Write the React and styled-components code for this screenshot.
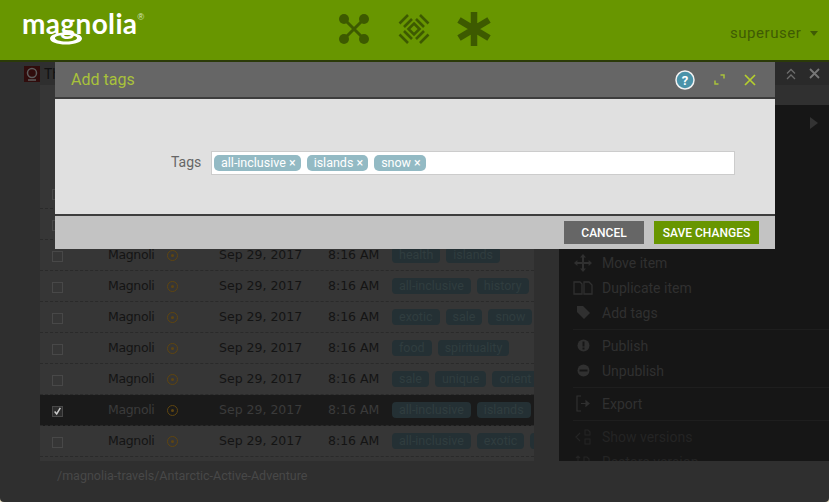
import React from "react";
import styled, { createGlobalStyle } from "styled-components";

const Global = createGlobalStyle`
  html, body { margin: 0; padding: 0; background: #e9e0c4; }
  * { box-sizing: border-box; }
`;
const din = `"Roboto", "Liberation Sans", sans-serif`;

const Page = styled.div`
  position: relative; width: 829px; height: 502px; overflow: hidden;
  display: flex; flex-direction: column; background: #2f2f2f;
  border-radius: 0 0 4px 4px; font-family: ${din};
`;
const Header = styled.header`
  height: 62px; flex: none; background: #689600; border-bottom: 2px solid #2b3a08;
  display: grid; grid-template-columns: 338px 1fr 220px; align-items: center;
`;
const Logo = styled.div`
  position: relative; padding: 0 0 15px 22px; height: 60px; display: flex; align-items: center;
  color: #fff; font: 700 28px/1 "Lato", sans-serif; letter-spacing: .35px;
  svg { position: absolute; left: 49px; top: 32px; }
`;
const Reg = styled.sup`
  font: 400 9px/1 "Liberation Sans", sans-serif; color: #dce8c0; align-self: flex-start;
  margin: 13px 0 0 0;
`;
const AppIcons = styled.nav`
  display: flex; gap: 26.5px; align-items: center; padding-bottom: 2px;
`;
const User = styled.div`
  display: flex; align-items: center; gap: 7px; padding: 7px 0 0 121px; color: #3f5b04;
  font: 400 15px/1 ${din}; letter-spacing: .55px;
`;
const Caret = styled.span`
  width: 0; height: 0; border: 4.5px solid transparent; border-top: 5px solid #3f5b04;
  border-bottom: 0; margin-left: 2px;
`;
const Work = styled.div`flex: 1; display: flex; min-height: 0;`;
const Main = styled.main`
  width: 534px; flex: none; display: flex; flex-direction: column;
`;
const TitleBar = styled.div`
  height: 23px; flex: none; display: flex; align-items: center; gap: 4px; padding-left: 24px;
  color: #111; font-size: 14px;
`;
const Table = styled.div`
  margin-left: 40px; height: 376px; background: #363636; padding-top: 93px; flex: none; overflow: hidden;
`;
const Row = styled.div`
  height: 31px; display: grid; grid-template-columns: 68px 58px 53px 109px 64px 142px;
  align-items: center; border-bottom: 1px dashed #2a2a2a;
  background: ${p => (p.$on ? "#1a1a1a" : "transparent")};
  color: ${p => (p.$on ? "#3a3a3a" : "#141414")};
  font: 400 12.5px/1 "DejaVu Sans", sans-serif; white-space: nowrap;
`;
const Name = styled.span`letter-spacing: -.35px;`;
const Check = styled.span`
  width: 11px; height: 11px; margin: 2px 0 0 12px; border: 1px solid #484848;
  display: flex; align-items: center; justify-content: center;
  background: ${p => (p.$on ? "#2c2c2c" : "transparent")};
`;
const Status = styled.span`
  width: 11px; height: 11px; margin-left: 1px; border-radius: 50%; border: 1.5px solid #5f4510;
  display: flex; align-items: center; justify-content: center;
  &::after { content: ""; width: 3px; height: 3px; border-radius: 50%; background: #5f4510; }
`;
const Tags = styled.div`display: flex; gap: 6px; overflow: hidden;`;
const RowTag = styled.span`
  height: 16px; flex: none; padding: 0 7px; border-radius: 4px; background: #243034; color: #303d3f;
  font: 400 12.5px/16px ${din};
`;
const StatusBar = styled.div`
  flex: 1; padding: 7px 0 0 57px; color: #484848; font-size: 12.5px;
`;
const Side = styled.aside`flex: 1; display: flex; flex-direction: column; padding-left: 25px;`;
const SideTop = styled.div`
  height: 23px; margin-left: -25px; padding-right: 9px; background: #2a2a2a; flex: none;
  display: flex; justify-content: flex-end; align-items: center; gap: 13px; color: #6c6c6c;
`;
const SideSub = styled.div`height: 20px; flex: none; margin-left: -25px; background: #303030;`;
const Panel = styled.div`
  height: 356px; flex: none; background: #161616; overflow: hidden; position: relative;
  display: flex; flex-direction: column; padding-top: 145px;
`;
const Play = styled.span`
  position: absolute; right: 11px; top: 12px; width: 0; height: 0;
  border-left: 8px solid #333; border-top: 6px solid transparent; border-bottom: 6px solid transparent;
`;
const Action = styled.div`
  height: 25px; flex: none; display: flex; align-items: center; padding-left: 14px; gap: 9px;
  color: ${p => (p.$dim ? "#242424" : "#303030")}; font: 400 14px/1 ${din};
`;
const ActionIcon = styled.span`width: 20px; display: flex; justify-content: center; flex: none;`;
const Sep = styled.div`height: 1px; margin: 4px 0 3px 14px; background: #1e1e1e; flex: none;`;

const Dialog = styled.section`
  position: absolute; left: 55px; top: 62px; width: 720px; height: 187px;
  display: flex; flex-direction: column; background: #c3c3c3;
`;
const DialogHead = styled.div`
  height: 37px; flex: none; padding: 0 19px 0 16px; display: flex; align-items: center; background: #666;
  border-bottom: 2px solid #3d3d3d; color: #a9c23b; font: 400 16px/1 ${din};
`;
const DialogTitle = styled.span`flex: 1;`;
const HeadTools = styled.div`display: flex; align-items: center;`;
const DialogBody = styled.div`
  height: 117px; flex: none; background: #e0e0e0; border-bottom: 2px solid #3d3d3d;
  display: flex; align-items: flex-start; padding: 52px 40px 0 116px; gap: 11px;
`;
const FieldLabel = styled.label`
  color: #666; font: 400 14px/23px ${din}; width: 29px;
`;
const TagInput = styled.div`
  width: 525px; height: 24px; background: #fff; border: 1px solid #ccc; display: flex;
  align-items: center; gap: 6px; padding-left: 2px;
`;
const DialogTag = styled.span`
  height: 16px; padding: 0 5px 0 7px; border-radius: 5px; background: #93bac4; color: #fff;
  font: 400 12.5px/16px ${din}; white-space: nowrap;
`;
const DialogFoot = styled.div`
  flex: 1; display: flex; justify-content: flex-end; align-items: center; gap: 10px; padding: 0 16px 0 0;
`;
const Button = styled.button`
  height: 23px; width: ${p => p.$w}px; border: 0; padding: 1px 0 0; color: #fff;
  background: ${p => (p.$primary ? "#689600" : "#666")};
  font: 500 12px/22px ${din};
`;

const Network = () => (
  <svg width="32" height="32" viewBox="0 0 32 32" fill="#3d5a00">
    <path d="M7 7 L25 25 M25 7 L7 25" stroke="#3d5a00" strokeWidth="3" />
    <circle cx="6" cy="6" r="5" /><circle cx="26" cy="6" r="5" />
    <circle cx="6" cy="26" r="5" /><circle cx="26" cy="26" r="5" />
  </svg>
);
const Diamonds = () => (
  <svg width="34" height="34" viewBox="0 0 34 34" fill="none" stroke="#3d5a00" strokeWidth="2.6">
    <path d="M17 11.5 L22.5 17 L17 22.5 L11.5 17 Z" />
    <path d="M2.5 11.5 L11 3 M7 15 L15 7 M19 7 L27 15 M23 3 L31.5 11.5 M2.5 22.5 L11 31 M7 19 L15 27 M19 27 L27 19 M23 31 L31.5 22.5" />
  </svg>
);
const Star = () => (
  <svg width="34" height="36" viewBox="0 0 34 36" fill="none" stroke="#3d5a00" strokeWidth="6.5">
    <path d="M17 1 V35 M2 9 L32 27 M32 9 L2 27" />
  </svg>
);

const rows = [
  ["health", "islands"], ["all-inclusive"], ["health", "islands"], ["all-inclusive", "history"],
  ["exotic", "sale", "snow", "food"], ["food", "spirituality"], ["sale", "unique", "orient"],
  ["all-inclusive", "islands"], ["all-inclusive", "exotic", "food"],
];
const g = "#303030";
const actions = [
  ["Move item", <svg width="18" height="18" viewBox="0 0 18 18" fill={g}><path d="M9 0l3 3.4h-2v4.6h4.6V6L18 9l-3.4 3v-2H10v4.6h2L9 18l-3-3.4h2V10H3.4v2L0 9l3.4-3v2H8V3.4H6z"/></svg>],
  ["Duplicate item", <svg width="20" height="14" viewBox="0 0 20 14" fill="none" stroke={g} strokeWidth="1.3"><path d="M1 1h6l2 2v10H1zM11 13V1h5l3 3v9z"/></svg>],
  ["Add tags", <svg width="13" height="13" viewBox="0 0 13 13" fill={g}><path d="M0 0h6l7 7-6 6-7-7z"/></svg>],
  "sep",
  ["Publish", <svg width="13" height="13" viewBox="0 0 13 13"><circle cx="6.5" cy="6.5" r="6" fill={g}/><rect x="5.5" y="2.5" width="2" height="5" fill="#161616"/><rect x="5.5" y="8.5" width="2" height="2" fill="#161616"/></svg>],
  ["Unpublish", <svg width="13" height="13" viewBox="0 0 13 13"><circle cx="6.5" cy="6.5" r="6" fill={g}/><rect x="2.5" y="5.5" width="8" height="2" fill="#161616"/></svg>],
  "sep",
  ["Export", <svg width="14" height="17" viewBox="0 0 14 17" fill="none" stroke={g} strokeWidth="1.2"><path d="M5 1H1v15h4M5 8.500h6"/><path d="M10 6l3 2.500-3 2.500z" fill={g}/></svg>],
  "sep",
  ["Show versions", <svg width="16" height="16" viewBox="0 0 16 16" fill="none" stroke="#242424" strokeWidth="1.2"><path d="M5 4L1 8l4 4M10 1h3l2 2v3h-5zM10 10h5v5h-5z"/></svg>, true],
  ["Restore version", <svg width="16" height="16" viewBox="0 0 16 16" fill="none" stroke="#242424" strokeWidth="1.2"><path d="M3 2v13M1 4l2-2 2 2M9 3h3l2 2v4H9z"/></svg>, true],
];

export default function App() {
  return (
    <Page>
      <Global />
      <Header>
        <Logo>
          magnolia<Reg>®</Reg>
          <svg width="34" height="13" viewBox="0 0 34 13">
            <path fillRule="evenodd" fill="#fff" d="M17 .5C26 .5 33 3 33 6.500S26 12.500 17 12.500 1 10 1 6.500 8 .5 17 .5zM17 3C11 3 6 4.200 6 6s5 3.500 11 3.500S28 8 28 6 23 3 17 3z" />
          </svg>
        </Logo>
        <AppIcons><Network /><Diamonds /><Star /></AppIcons>
        <User>superuser <Caret /></User>
      </Header>
      <Work>
        <Main>
          <TitleBar>
            <svg width="16" height="16" viewBox="0 0 16 16">
              <rect width="16" height="16" fill="#300c0c" />
              <circle cx="8" cy="7" r="4.500" fill="none" stroke="#5c5c5c" strokeWidth="1.500" />
              <path d="M4 14h8" stroke="#5c5c5c" strokeWidth="1.500" />
            </svg>
            <span>The</span>
          </TitleBar>
          <Table>
            {rows.map((tags, i) => (
              <Row key={i} $on={i === 7}>
                <Check $on={i === 7}>
                  {i === 7 && (
                    <svg width="11" height="11" viewBox="0 0 11 11" fill="none" stroke="#ccc" strokeWidth="1.800">
                      <path d="M2 5.500l2.500 3L9 1" />
                    </svg>
                  )}
                </Check>
                <Name>Magnoli</Name>
                <Status />
                <span>Sep 29, 2017</span>
                <span>8:16 AM</span>
                <Tags>{tags.map(t => <RowTag key={t}>{t}</RowTag>)}</Tags>
              </Row>
            ))}
          </Table>
          <StatusBar>/magnolia-travels/Antarctic-Active-Adventure</StatusBar>
        </Main>
        <Side>
          <SideTop>
            <svg width="10" height="12" viewBox="0 0 10 12" fill="none" stroke="#6c6c6c" strokeWidth="1.300">
              <path d="M1 5.500L5 1.500l4 4M1 11L5 7l4 4" />
            </svg>
            <svg width="11" height="11" viewBox="0 0 11 11" fill="none" stroke="#777" strokeWidth="1.800">
              <path d="M1 1l9 9M10 1L1 10" />
            </svg>
          </SideTop>
          <SideSub />
          <Panel>
            <Play />
            {actions.map((a, i) =>
              a === "sep" ? <Sep key={i} /> : (
                <Action key={a[0]} $dim={a[2]}>
                  <ActionIcon>{a[1]}</ActionIcon>{a[0]}
                </Action>
              )
            )}
          </Panel>
        </Side>
      </Work>
      <Dialog>
        <DialogHead>
          <DialogTitle>Add tags</DialogTitle>
          <HeadTools>
            <svg width="20" height="20" viewBox="0 0 20 20">
              <circle cx="10" cy="10" r="9" fill="#4b93a9" stroke="#f2f2f2" strokeWidth="1.500" />
              <text x="10" y="14.500" textAnchor="middle" fill="#fff" fontFamily="Roboto, sans-serif" fontWeight="700" fontSize="13">?</text>
            </svg>
            <svg style={{ marginLeft: 19 }} width="11" height="11" viewBox="0 0 11 11" fill="none" stroke="#a9c23b" strokeWidth="1.500">
              <path d="M6.500 1h3.500v3.500M4.500 10H1V6.500" />
            </svg>
            <svg style={{ marginLeft: 19 }} width="12" height="12" viewBox="0 0 12 12" fill="none" stroke="#b5cf2e" strokeWidth="1.700">
              <path d="M1 1l10 10M11 1L1 11" />
            </svg>
          </HeadTools>
        </DialogHead>
        <DialogBody>
          <FieldLabel>Tags</FieldLabel>
          <TagInput>
            <DialogTag>all-inclusive ×</DialogTag>
            <DialogTag>islands ×</DialogTag>
            <DialogTag>snow ×</DialogTag>
          </TagInput>
        </DialogBody>
        <DialogFoot>
          <Button $w={80}>CANCEL</Button>
          <Button $w={105} $primary>SAVE CHANGES</Button>
        </DialogFoot>
      </Dialog>
    </Page>
  );
}
